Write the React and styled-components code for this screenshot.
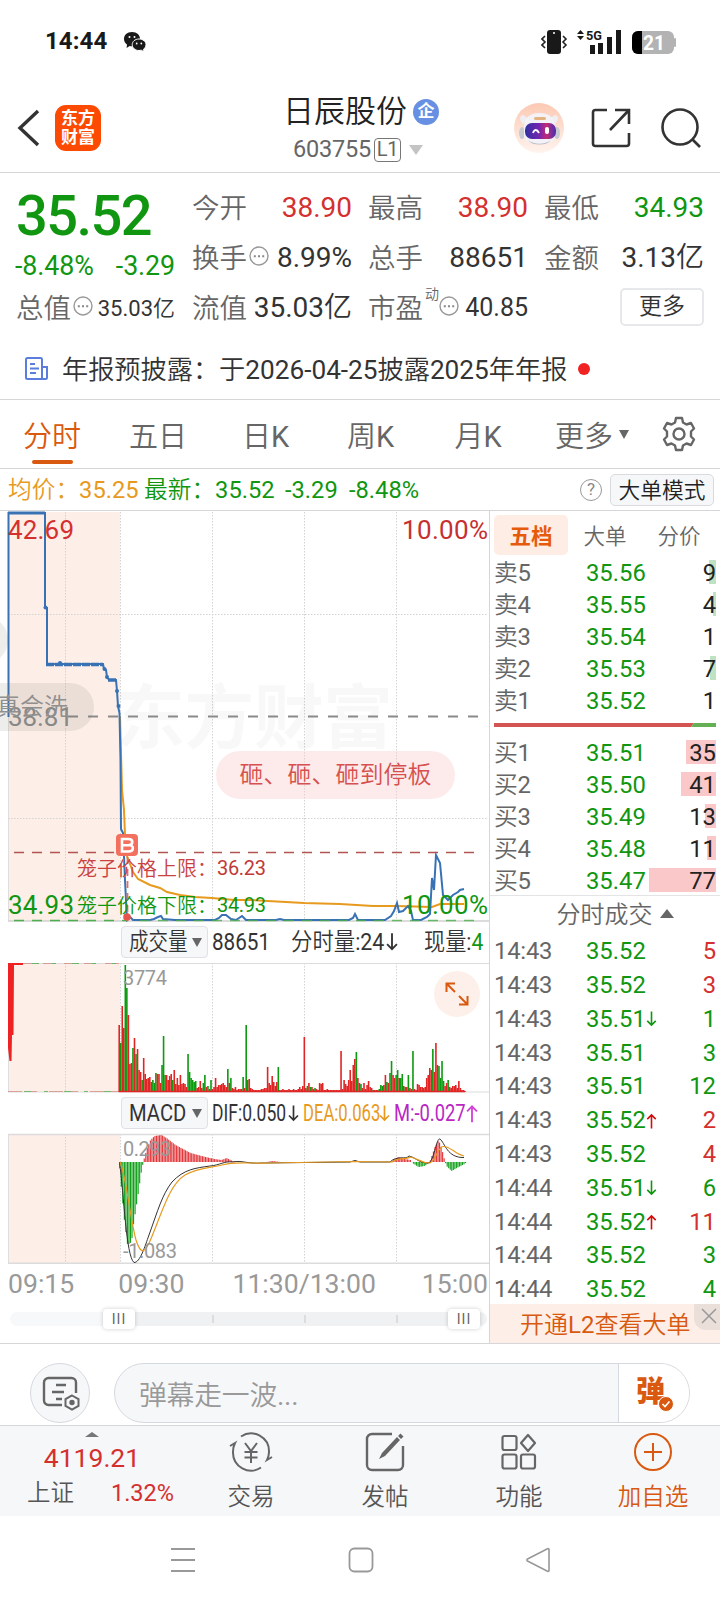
import React from 'react';
import styled, { createGlobalStyle } from 'styled-components';

const GREEN = '#109610';
const RED = '#d4302f';
const ORANGE = '#d8590f';
const LINE = '#d5d6d8';
const FONT = 'Roboto, "Noto Sans CJK SC DemiLight", "Noto Sans CJK SC", sans-serif';
const BOLD_FONT = 'Roboto, "Noto Sans CJK SC", sans-serif';

const sells = [
  { label: '卖5', price: '35.56', amount: 9, bar: 7 },
  { label: '卖4', price: '35.55', amount: 4, bar: 3 },
  { label: '卖3', price: '35.54', amount: 1, bar: 0 },
  { label: '卖2', price: '35.53', amount: 7, bar: 6 },
  { label: '卖1', price: '35.52', amount: 1, bar: 0 },
];

const buys = [
  { label: '买1', price: '35.51', amount: 35, bar: 30 },
  { label: '买2', price: '35.50', amount: 41, bar: 35 },
  { label: '买3', price: '35.49', amount: 13, bar: 11 },
  { label: '买4', price: '35.48', amount: 11, bar: 9 },
  { label: '买5', price: '35.47', amount: 77, bar: 67 },
];

const trades = [
  { time: '14:43', price: '35.52', amount: 5, side: 'buy' },
  { time: '14:43', price: '35.52', amount: 3, side: 'buy' },
  { time: '14:43', price: '35.51', amount: 1, side: 'sell', move: 'down' },
  { time: '14:43', price: '35.51', amount: 3, side: 'sell' },
  { time: '14:43', price: '35.51', amount: 12, side: 'sell' },
  { time: '14:43', price: '35.52', amount: 2, side: 'buy', move: 'up' },
  { time: '14:43', price: '35.52', amount: 4, side: 'buy' },
  { time: '14:44', price: '35.51', amount: 6, side: 'sell', move: 'down' },
  { time: '14:44', price: '35.52', amount: 11, side: 'buy', move: 'up' },
  { time: '14:44', price: '35.52', amount: 3, side: 'sell' },
  { time: '14:44', price: '35.52', amount: 4, side: 'sell' },
];

// one bar per minute, a negative number is a falling minute
const volumes = [
  67, -49, 86, 64, -127, -104, 77, 28, 29, -44, 54, -38, 43, 22, 20, -12, 34, 18, 13, 14, 15, 10, -12, -9, -19, 18, 18, 9,
  -27, -56, -17, 17, 12, 16, 18, -12, 22, 8, 14, 7, 17, 8, 9, 8, 5, -38, -20, -14, -12, -10, -11, 4, 5, 11, 4, -9, -17, 5,
  -6, 3, -12, 3, 5, 14, 5, 7, 7, 8, 9, 7, 5, -23, 9, -14, 4, 3, 5, 2, 3, 3, 3, -15, 4, -67, -12, 13, 4, 3, 2, 2,
  2, 2, 2, 3, 3, 4, 4, 25, 9, 7, 16, 10, 6, 10, -25, 2, 2, 3, 2, 2, 2, 3, 2, 2, 3, 2, 2, 3, 5, 3, 6, 55, 4, -6, 9,
  -5, 5, 3, -4, 3, 2, 9, 8, 9, 2, 2, 3, 2, 2, 2, 2, 2, 2, 2, 2, 41, 3, 12, 8, 6, 12, 22, 11, 27, 33, -40, 14, 9, -8, 4,
  9, 3, 7, 11, 5, 4, -2, 2, 2, -2, -3, -7, -6, 7, 17, -10, 9, -19, -31, 17, 14, -17, -22, 14, -14, -18, 6, -5, 5, -17,
  4, 3, -41, 3, 2, 8, 7, 5, 5, 4, 5, 14, 17, 24, 22, -43, 20, 49, 27, -26, -14, -31, -11, 6, 9, -12, 5, 4, 6, 6, 7, 4,
  11, 4, 2, 2, 1,
];

// [x, height] turning points of the MACD histogram
const histogram = [
  [119, -4], [121, -28], [124, -60], [127, -83], [131, -80], [133, -62], [137, -36], [141, -8], [143, 1], [146, 12],
  [150, 22], [154, 26], [161, 27], [166, 24], [175, 17], [190, 9], [205, 5], [214, 3], [221, 2], [226, 4], [232, 1],
  [240, 0], [266, 0], [272, 1], [280, 0], [390, 0], [394, 3], [398, 5], [404, 3], [410, 2], [412, -1], [418, -5],
  [424, -4], [428, -1], [430, 2], [434, 14], [438, 22], [441, 14], [444, 2], [446, -4], [451, -9], [458, -5], [464, -2], [466, 0],
];

const heightAt = (x) => {
  const next = histogram.findIndex((point) => point[0] > x);
  if (next < 1) return 0;
  const [x0, y0] = histogram[next - 1];
  const [x1, y1] = histogram[next];
  return y0 + ((y1 - y0) * (x - x0)) / (x1 - x0);
};

const StatusIcons = () => (
  <svg width="136" height="28" viewBox="541 27 136 28">
    <rect x="547" y="29" width="14" height="24" rx="3" fill="#191919" />
    <circle cx="554" cy="32" r="1" fill="#fff" />
    <path d="M545 35l-3 3 3 3-3 3 3 3M563 35l3 3-3 3 3 3-3 3" fill="none" stroke="#222" strokeWidth="1.6" />
    <path d="M577 33l3.5-4 3.5 4zM577 35l3.5 4 3.5-4z" fill="#191919" />
    <text x="586" y="39" fontSize="13" fontWeight="700" textLength="16" lengthAdjust="spacingAndGlyphs" fill="#191919">5G</text>
    <path d="M590 44h5v9h-5zM598 42h5v11h-5zM607 36h5v17h-5zM616 29h5v24h-5z" fill="#191919" />
    <rect x="632" y="30" width="42" height="23" rx="6" fill="#b3b3b3" />
    <rect x="674" y="37" width="2" height="9" rx="1" fill="#b3b3b3" />
    <path d="M642 30v23h-4a6 6 0 0 1-6-6V36a6 6 0 0 1 6-6z" fill="#000" />
    <text x="643" y="49" fontSize="21" fontWeight="700" textLength="22" lengthAdjust="spacingAndGlyphs" fill="#fff">21</text>
  </svg>
);

const WechatIcon = () => (
  <svg width="24" height="22" viewBox="0 0 24 22">
    <path d="M9 1C4 1 1 4 1 8c0 2.500 1.300 4.300 3 5.600L3.600 17l3-2c1 .3 2 .4 3 .4C14 15 17 12 17 8s-3-7-8-7z" fill="#191919" />
    <path d="M16 8c-4 0-6.800 2.600-6.800 5.700S12 19.500 16 19.500c.8 0 1.600-.1 2.300-.3l2.700 1.600-.5-2.600c1.500-1 2.500-2.600 2.500-4.400C23 10.600 20 8 16 8z" fill="#191919" stroke="#fff" />
    <circle cx="6.500" cy="6" r="1" fill="#fff" />
    <circle cx="11.500" cy="6" r="1" fill="#fff" />
    <circle cx="13.700" cy="12.500" r=".9" fill="#fff" />
    <circle cx="18.300" cy="12.500" r=".9" fill="#fff" />
  </svg>
);

const RobotIcon = () => (
  <svg width="50" height="52" viewBox="0 0 50 52">
    <defs>
      <linearGradient id="halo" x1="0" y1="0" x2="0" y2="1">
        <stop offset="0" stopColor="#fcc9b3" />
        <stop offset="1" stopColor="#fff4ee" />
      </linearGradient>
      <linearGradient id="visor">
        <stop offset="0" stopColor="#3230a0" />
        <stop offset=".45" stopColor="#7425b0" />
        <stop offset=".7" stopColor="#c22a77" />
        <stop offset="1" stopColor="#4430b4" />
      </linearGradient>
    </defs>
    <circle cx="25" cy="26" r="25" fill="url(#halo)" />
    <path d="M9 22C5 17 5 14 9 13l6 4zM41 22c4-5 4-8 0-9l-6 4z" fill="#efeef3" />
    <ellipse cx="8" cy="31" rx="3" ry="6" fill="#c9c9d2" />
    <ellipse cx="43" cy="31" rx="3" ry="6" fill="#c9c9d2" />
    <path d="M10 25c0-9 6-14 15.500-14S41 16 41 25v8c0 6-5 9-15.500 9S10 39 10 33z" fill="#f3f2f7" />
    <path d="M14 38c6 5 17 5 23 0-2 3-6 4.500-11.500 4.500S16 41 14 38z" fill="#b8b8c4" />
    <rect x="20" y="15" width="12" height="3" rx="1.500" fill="#e4b382" />
    <rect x="11" y="21" width="31" height="16" rx="7" fill="url(#visor)" />
    <path d="M19 31c1.500-4 4-4 6 0" fill="none" stroke="#fff" strokeWidth="1.800" />
    <rect x="31" y="25" width="4" height="7" rx="2" fill="#fff" />
  </svg>
);

const DotsIcon = () => (
  <svg width="20" height="20" viewBox="0 0 20 20">
    <circle cx="10" cy="10" r="9" fill="none" stroke="#999" strokeWidth="1.400" />
    <path d="M4.800 9.200h2v2h-2zM9 9.200h2v2H9zM13.200 9.200h2v2h-2z" fill="#888" />
  </svg>
);

const NoticeIcon = () => (
  <svg width="25" height="25" viewBox="0 0 25 25" fill="none" stroke="#5b7ede" strokeWidth="2">
    <path d="M18 23V3.500A1.500 1.500 0 0 0 16.500 2h-13A1.500 1.500 0 0 0 2 3.500v18A1.500 1.500 0 0 0 3.500 23h18a1.500 1.500 0 0 0 1.500-1.500V11h-5M6 8h5M6 12.500h9M6 17h6" />
  </svg>
);

const GearIcon = () => (
  <svg width="36" height="36" viewBox="0 0 36 36" fill="none" stroke="#666" strokeWidth="2.400" strokeLinejoin="round">
    <path d="M15 2h6l1 4.500 3.500 2 4.500-1.500 3 5.500-3 3v5l3 3-3 5.500-4.500-1.500-3.500 2L21 34h-6l-1-4.500-3.500-2L6 29l-3-5.500 3-3v-5l-3-3L6 7l4.500 1.500 3.500-2z" />
    <circle cx="18" cy="18" r="5.500" />
  </svg>
);

const MoveArrow = ({ up, color, width = 11, height = 17 }) => (
  <svg width={width} height={height} viewBox="0 0 11 17" fill="none" stroke={color} strokeWidth="1.700">
    <path d={up ? 'M5.500 16.500V2M1 6.500L5.500 2 10 6.500' : 'M5.500.5V15M1 10.500L5.500 15 10 10.500'} />
  </svg>
);

const Grid = ({ top, bottom }) => (
  <>
    <rect x="8" y={top} width="112" height={bottom - top} fill="#fdeee8" />
    <path
      d={[65.5, 120.5, 212.5, 304.5, 396.5].map((x) => `M${x} ${top}V${bottom}`).join('')}
      stroke="#d2d2d2"
      strokeDasharray="1.5 1.5"
    />
    <path d={`M8.500 ${top}V${bottom}`} stroke="#dedede" />
  </>
);

const PriceChart = () => (
  <ChartSvg height="411" viewBox="0 511 489 411">
    <Grid top={512} bottom={921} />
    <path d="M8 614.500H487M8 818.500H487" stroke="#d2d2d2" strokeDasharray="1.5 1.5" />
    <Watermark x="115" y="743" textLength="278">东方财富</Watermark>
    <path d="M8 921H489" stroke="#d0d0d0" strokeWidth="1.500" />
    <path d="M68 716.500H480" stroke="#8a8a8a" strokeWidth="1.800" strokeDasharray="10 10" />
    <path d="M14 852.500H475" stroke="#b25450" strokeWidth="1.300" strokeDasharray="10 8" />
    <polyline
      fill="none"
      stroke="#e79a1e"
      strokeWidth="2"
      points="120,716 122,790 124,810 125,835 127,856 130,864 133,872 138,879 150,885 160,888 167,892 180,895 195,897 212,898 235,900 250,900 304,903 340,904 373,906 396,906 432,907 440,904 464,904"
    />
    <polyline
      fill="none"
      stroke="#3872b5"
      strokeWidth="2"
      points="8.500,717 8.500,513 45,513 45,608 47,608 47,664 103,664 104,669 106,670 107,677 109,680 116,680 117,691 118,706 119.500,713 120.500,760 121,829 123,833 125,880 127,920 130,917 133,920 150,920 154,919 158,917 161,916 163,919 175,920 215,920 219,918 222,915 226,915 231,919 236,920 242,916 246,920 276,920 280,919 284,920 349,920 353,918 355,914 358,920 385,920 391,916 394,911 397,903 399,912 403,911 408,906 411,911 413,920 421,920 427,917 430,914 432,878 434,890 436,855 440,863 443,895 448,900 453,895 458,892 460,890 464,889"
    />
    <path d="M8 513H45" stroke="#3872b5" strokeWidth="3" />
    <path d="M46 664.500H103M108 680H117" stroke="#3872b5" strokeWidth="3.500" strokeDasharray="8 1" />
    <g fill="#3872b5">
      <circle cx="45.500" cy="607.500" r="2" />
      <circle cx="60" cy="663" r="2" />
      <circle cx="104.500" cy="669" r="2" />
      <circle cx="107" cy="677" r="2" />
      <circle cx="117" cy="691" r="2" />
      <circle cx="118.500" cy="706" r="2" />
    </g>
    <path d="M14 920.500H128" stroke="#4cae4c" strokeWidth="1.600" strokeDasharray="10 8" />
    <path d="M140 920.500H475" stroke="#4cae4c" strokeWidth="1.600" strokeDasharray="10 8" opacity=".8" />
    <path d="M127.500 857V914" stroke="#e2706a" strokeWidth="1.800" strokeDasharray="7 5" />
    <circle cx="127" cy="917" r="3.800" fill="#e9544a" />
    <rect x="116" y="834" width="22" height="22" rx="4" fill="#f3705f" />
    <path d="M122 839h6.500c5 0 5 5.600.5 6 5.500.4 5 6.500-.5 6.500H122zM122 845.200h7" fill="none" stroke="#fff" strokeWidth="2.600" />
    <g fontSize="26">
      <text x="8" y="539" textLength="66" fill={RED}>42.69</text>
      <text x="402" y="539" textLength="86" fill="#c63030">10.00%</text>
      <text x="8" y="726" textLength="65" fill="#8d8d8d">38.81</text>
      <text x="8" y="914" textLength="66" fill={GREEN}>34.93</text>
      <text x="402" y="914" textLength="86" fill={GREEN}>10.00%</text>
    </g>
    <g fontSize="20">
      <text x="77" y="875.500" fill="#c9423f">笼子价格上限：</text>
      <text x="217" y="875" textLength="49" fill="#c03a38">36.23</text>
      <text x="77" y="912.500" fill={GREEN}>笼子价格下限：</text>
      <text x="217" y="912" textLength="49" fill={GREEN}>34.93</text>
    </g>
  </ChartSvg>
);

const VolumeChart = () => (
  <ChartSvg height="132" viewBox="0 962 489 132">
    <Grid top={963} bottom={1092} />
    <path d="M8 963.500H489M8 1092H489" stroke="#dcdcdc" />
    <path d="M8 963h15v2h-9l-.5 70h-1.500l-.5 26h-2l-1.500-13z" fill="#ee2222" />
    <g opacity=".55">
      <path d="M23 963.500H120M8 1091.500H120" stroke="#c96a5a" strokeDasharray="14 6 9 12" />
      <path d="M32 963.500H116M24 1091.500H118" stroke={GREEN} strokeDasharray="7 13 4 16" />
    </g>
    {volumes.map((v, i) => (
      <rect
        key={i}
        x={118.4 + i * 1.53}
        y={1092 - Math.abs(v)}
        width="1.6"
        height={Math.abs(v)}
        fill={v < 0 ? '#0c9a10' : '#e02525'}
      />
    ))}
    <path d="M119 1091.500H465" stroke="#e02525" strokeWidth="1.400" />
    <text x="123" y="985" fontSize="20" textLength="44" fill="#999">3774</text>
    <circle cx="457" cy="994" r="23" fill="#fdf0ea" />
    <path d="M455 992l-8-8M446.500 992v-8.500h8.500M459 996l8 8M467.500 996v8.500H459" fill="none" stroke={ORANGE} strokeWidth="2" />
  </ChartSvg>
);

const MacdChart = () => {
  const bars = [];
  for (let x = 119.2; x < 465; x += 1.53) bars.push([x, heightAt(x)]);
  return (
    <ChartSvg height="133" viewBox="0 1132 489 133">
      <Grid top={1134} bottom={1263} />
      <path d="M8 1134.500H489M8 1263.200H489" stroke="#dcdcdc" strokeWidth="1.400" />
      {bars.map(([x, h]) => (
        <rect key={x} x={x} y={h > 0 ? 1162 - h : 1162} width="1.150" height={Math.abs(h)} fill={h > 0 ? '#e2383c' : '#12a01b'} />
      ))}
      <path
        fill="none"
        stroke="#333"
        d="M119.500 1162C124 1195 126 1256 134 1262.500C140 1263 145 1246 149 1235C158 1210 162 1195 172 1182C184 1169 196 1168 210 1166C221 1165 223 1161 233 1162C242 1160 246 1164 262 1163L350 1162L355 1160.500L360 1162L390 1162C397 1155 406 1160 409 1156C417 1158 418 1163 429 1163C435 1158 436 1138 440 1139C445 1143 447 1158 464 1157.500"
      />
      <path
        fill="none"
        stroke="#e79a1e"
        strokeWidth="1.200"
        d="M120 1162C126 1175 130 1218 136 1240C141 1256 145 1252 150 1241C162 1213 169 1185 185 1175C199 1167 211 1168 222 1165C236 1161 250 1164 270 1163L355 1161.500L392 1162C398 1157 406 1160 410 1157C418 1158 420 1163 430 1163C436 1160 438 1147 443 1146.500C451 1146 454 1154 464 1156"
      />
      <text x="123" y="1156" fontSize="20" textLength="48" fill="#999">0.293</text>
      <text x="123" y="1258" fontSize="20" textLength="54" fill="#999">-1.083</text>
    </ChartSvg>
  );
};

const BookRow = ({ label, price, amount, bar, color }) => (
  <Row $height={32}>
    <RowLabel>{label}</RowLabel>
    <RowPrice>{price}</RowPrice>
    <Amount>
      <AmountBar $color={color} style={{ width: bar }} />
      <span>{amount}</span>
    </Amount>
  </Row>
);

const App = () => (
  <Page>
    <GlobalStyle />
    <StatusBar>
      <Clock>14:44</Clock>
      <WechatIcon />
      <Spacer />
      <StatusIcons />
    </StatusBar>

    <Header>
      <svg width="24" height="38" viewBox="0 0 24 38" fill="none" stroke="#333" strokeWidth="3.400">
        <path d="M21 2L3 19l18 17" />
      </svg>
      <Logo>
        <span>东方</span>
        <span>财富</span>
      </Logo>
      <StockTitle>
        <StockName>
          日辰股份<Badge>企</Badge>
        </StockName>
        <StockCode>
          603755<Level>L1</Level>
          <Triangle $size={7} $height={10} $color="#c4c4c4" />
        </StockCode>
      </StockTitle>
      <RobotIcon />
      <svg width="40" height="40" viewBox="0 0 40 40" fill="none" stroke="#333" strokeWidth="2.600">
        <path d="M16 2H4.500A2.500 2.500 0 0 0 2 4.500v31A2.500 2.500 0 0 0 4.500 38h31a2.500 2.500 0 0 0 2.500-2.500V25M24 2h14v14M38 2L19 22" />
      </svg>
      <svg width="42" height="42" viewBox="0 0 42 42" fill="none" stroke="#333" strokeWidth="2.600">
        <circle cx="20" cy="20" r="17.500" />
        <path d="M32 32l8 8" />
      </svg>
    </Header>

    <Quote>
      <Latest>
        <Price>35.52</Price>
        <Change>
          <span>-8.48%</span>
          <span>-3.29</span>
        </Change>
        <Field $height={46}>
          <FieldLabel>总值</FieldLabel>
          <DotsIcon />
          <Value $size={22}>35.03亿</Value>
        </Field>
      </Latest>
      <Fields>
        <Field><FieldLabel>今开</FieldLabel><Value $color={RED}>38.90</Value></Field>
        <Field><FieldLabel>最高</FieldLabel><Value $color={RED}>38.90</Value></Field>
        <Field><FieldLabel>最低</FieldLabel><Value $color={GREEN}>34.93</Value></Field>
        <Field><FieldLabel>换手</FieldLabel><DotsIcon /><Value>8.99%</Value></Field>
        <Field><FieldLabel>总手</FieldLabel><Value>88651</Value></Field>
        <Field><FieldLabel>金额</FieldLabel><Value>3.13亿</Value></Field>
        <Field><FieldLabel>流值</FieldLabel><Value>35.03亿</Value></Field>
        <Field><FieldLabel>市盈</FieldLabel><Sup>动</Sup><DotsIcon /><Value $size={25}>40.85</Value></Field>
        <Field><MoreButton>更多</MoreButton></Field>
      </Fields>
    </Quote>

    <Notice>
      <NoticeIcon />
      <NoticeText>年报预披露：于2026-04-25披露2025年年报</NoticeText>
      <Dot />
    </Notice>

    <Tabs>
      <Tab $active $width={104}>分时</Tab>
      <Tab $width={108}>五日</Tab>
      <Tab $width={107}>日K</Tab>
      <Tab $width={103}>周K</Tab>
      <Tab $width={112}>月K</Tab>
      <Tab $width={116}>
        更多<Triangle $size={5} $height={9} $color="#666" />
      </Tab>
      <Spacer />
      <GearIcon />
    </Tabs>

    <InfoBar>
      <InfoText $color="#e79a1e" $width={136}><span>均价：</span>35.25</InfoText>
      <InfoText $color={GREEN} $width={141}><span>最新：</span>35.52</InfoText>
      <InfoText $color={GREEN} $width={64}>-3.29</InfoText>
      <InfoText $color={GREEN}>-8.48%</InfoText>
      <Spacer />
      <Help>?</Help>
      <ModeButton>大单模式</ModeButton>
    </InfoBar>

    <Main>
      <Charts>
        <PriceArea>
          <PriceChart />
          <Bullet $left={216} $top={240} $width={239}>砸、砸、砸到停板</Bullet>
          <Bullet $gray $left={-60} $top={172} $width={154}>真会洗</Bullet>
          <Bullet $gray $left={-60} $top={105} $width={68} />
        </PriceArea>
        <IndicatorBar $height={40}>
          <Picker><Squeezed $scale={0.83} $width={60}>成交量</Squeezed><Triangle $size={5.5} $height={9} $color="#666" /></Picker>
          <Squeezed $scale={0.88} $width={79}>88651</Squeezed>
          <Squeezed $scale={0.91} $width={95}>分时量:24</Squeezed>
          <MoveArrow color="#333" width={12} height={20} />
          <Spacer />
          <Squeezed $scale={0.9} $width={60}>现量:<Green>4</Green></Squeezed>
        </IndicatorBar>
        <VolumeChart />
        <IndicatorBar $height={38}>
          <Picker><Squeezed $scale={0.86} $width={60}>MACD</Squeezed><Triangle $size={5.5} $height={9} $color="#666" /></Picker>
          <Squeezed $scale={0.745} $width={76}>DIF:0.050</Squeezed>
          <MoveArrow color="#333" height={19} />
          <Squeezed $scale={0.71} $width={76} $color="#e79a1e" $left={4}>DEA:0.063</Squeezed>
          <MoveArrow color="#e79a1e" height={19} />
          <Squeezed $scale={0.78} $width={72} $color="#b927c4" $left={4}>M:-0.027</Squeezed>
          <MoveArrow up color="#d243da" width={12} height={19} />
        </IndicatorBar>
        <MacdChart />
        <TimeAxis>
          <span>09:15</span>
          <span>09:30</span>
          <span>11:30/13:00</span>
          <span>15:00</span>
        </TimeAxis>
        <Range>
          <Track>
            <Handle $left={93}>III</Handle>
            <Tick $left={202} />
            <Tick $left={294} />
            <Tick $left={386} />
            <Handle $left={438}>III</Handle>
          </Track>
        </Range>
      </Charts>

      <Side>
        <SideTabs>
          <SideTab $active>五档</SideTab>
          <SideTab>大单</SideTab>
          <SideTab>分价</SideTab>
        </SideTabs>
        {sells.map((row) => <BookRow key={row.label} {...row} color="#bfe3c2" />)}
        <Ratio>
          <svg width="222" height="4" viewBox="0 0 222 4">
            <path d="M0 0h200l-3 4H0z" fill="#d35453" />
            <path d="M200 0h22v4h-25z" fill="#65b054" />
          </svg>
        </Ratio>
        {buys.map((row) => <BookRow key={row.label} {...row} color="#fbc8c9" />)}
        <TradesTitle>
          分时成交<Triangle $up $size={7} $height={9} $color="#666" />
        </TradesTitle>
        {trades.map((trade, index) => (
          <Row key={index} $height={33.8}>
            <RowLabel>{trade.time}</RowLabel>
            <RowPrice>
              {trade.price}
              {trade.move && <MoveArrow up={trade.move === 'up'} color={trade.move === 'up' ? '#d40e0e' : GREEN} height={16} />}
            </RowPrice>
            <Amount $color={trade.side === 'buy' ? RED : GREEN}><span>{trade.amount}</span></Amount>
          </Row>
        ))}
        <Promo>
          开通L2查看大单
          <Close>
            <svg width="16" height="16" viewBox="0 0 16 16" stroke="#999" strokeWidth="1.500">
              <path d="M1 1l14 14M15 1L1 15" />
            </svg>
          </Close>
        </Promo>
      </Side>
    </Main>

    <CommentBar>
      <RoundButton>
        <svg width="38" height="36" viewBox="0 0 38 36" fill="none" stroke="#666" strokeWidth="2.400">
          <path d="M20 29H6.500A4.500 4.500 0 0 1 2 24.500v-18A4.500 4.500 0 0 1 6.500 2h23A4.500 4.500 0 0 1 34 6.500V17M14 9h10M10 16h12M14 23h6" />
          <path d="M30 19.500l6.500 3.700v6.600L30 33.500l-6.500-3.700v-6.600z" strokeWidth="2" />
          <circle cx="30" cy="26.500" r="1.500" fill="#666" />
        </svg>
      </RoundButton>
      <CommentInput>
        <Placeholder>弹幕走一波...</Placeholder>
        <Send>
          <span>弹</span>
          <Check viewBox="0 0 16 16">
            <circle cx="8" cy="8" r="7.500" fill={ORANGE} stroke="#fff" />
            <path d="M4.500 8l2.500 2.600L11.500 5.500" fill="none" stroke="#fff" strokeWidth="1.600" />
          </Check>
        </Send>
      </CommentInput>
    </CommentBar>

    <BottomNav>
      <IndexBox>
        <Triangle $up $size={7} $height={5} $color="#777" />
        <IndexValue>4119.21</IndexValue>
        <IndexRow>
          <span>上证</span>
          <Red>1.32%</Red>
        </IndexRow>
      </IndexBox>
      <NavItem>
        <svg width="44" height="40" viewBox="0 0 44 40" fill="none" stroke="#666" strokeWidth="2">
          <path d="M12 4.500A18 18 0 0 1 40 20c0 3-1 6-2 8l5-3M32 35.500A18 18 0 0 1 4 20c0-3 .5-6 2-9l-5 3M16 11l6 8 6-8M22 19v12M15.500 20h13M15.500 25.500h13" />
        </svg>
        交易
      </NavItem>
      <NavItem>
        <svg width="40" height="40" viewBox="0 0 40 40" fill="none" stroke="#666" strokeWidth="2.400">
          <path d="M27 2H7a5 5 0 0 0-5 5v26a5 5 0 0 0 5 5h26a5 5 0 0 0 5-5V14" />
          <path d="M17 21L32 5l3 3-15 16-6 3zM33 4l2.500-2.500 3 3L36 7z" fill="#666" stroke="none" />
        </svg>
        发帖
      </NavItem>
      <NavItem>
        <svg width="40" height="40" viewBox="0 0 40 40" fill="none" stroke="#666" strokeWidth="2.200">
          <rect x="3.500" y="4" width="14" height="14" rx="2" />
          <rect x="3.500" y="22.500" width="14" height="14" rx="2" />
          <rect x="22" y="22.500" width="14" height="14" rx="2" />
          <path d="M29 3l7 8-7 8-7-8z" strokeLinejoin="round" />
        </svg>
        功能
      </NavItem>
      <NavItem $color={ORANGE}>
        <svg width="40" height="40" viewBox="0 0 40 40" fill="none" stroke={ORANGE} strokeWidth="2">
          <circle cx="20" cy="20" r="18" />
          <path d="M20 11v18M11 20h18" />
        </svg>
        加自选
      </NavItem>
    </BottomNav>

    <SystemNav>
      <svg width="26" height="26" viewBox="0 0 26 26" fill="none" stroke="#999" strokeWidth="1.800">
        <path d="M1 2h24M1 13h24M1 24h24" />
      </svg>
      <svg width="26" height="26" viewBox="0 0 26 26" fill="none" stroke="#999" strokeWidth="1.800">
        <rect x="1.500" y="1.500" width="23" height="23" rx="5" />
      </svg>
      <svg width="26" height="26" viewBox="0 0 26 26" fill="none" stroke="#999" strokeWidth="1.600" strokeLinejoin="round">
        <path d="M24 2.500v21c0 .8-.8 1-1.500.7L2.500 14c-.8-.5-.8-1.500 0-2L22.500 1.800c.7-.4 1.500 0 1.500.7z" />
      </svg>
    </SystemNav>
  </Page>
);

const GlobalStyle = createGlobalStyle`
  body {
    margin: 0;
    background: #fff;
  }

  * {
    box-sizing: border-box;
  }

  svg {
    display: block;
    flex-shrink: 0;
  }
`;

const Page = styled.div`
  width: 720px;
  height: 1604px;
  overflow: hidden;
  color: #333;
  font-family: ${FONT};
  line-height: 1.15;
  white-space: nowrap;
`;

const Spacer = styled.div`
  flex: 1;
`;

const Green = styled.span`
  color: ${GREEN};
`;

const Red = styled.span`
  color: ${RED};
`;

const Triangle = styled.i`
  width: 0;
  height: 0;
  flex-shrink: 0;
  border: ${(p) => p.$size}px solid transparent;
  border-top: ${(p) => (p.$up ? '0' : `${p.$height}px solid ${p.$color}`)};
  border-bottom: ${(p) => (p.$up ? `${p.$height}px solid ${p.$color}` : '0')};
`;

const StatusBar = styled.div`
  display: flex;
  align-items: center;
  gap: 16px;
  height: 82px;
  padding: 1px 43px 0 45px;
`;

const Clock = styled.div`
  width: 62px;
  padding-top: 1px;
  font-size: 24px;
  font-weight: 700;
  letter-spacing: 0.1px;
  color: #191919;
`;

const Header = styled.header`
  display: flex;
  align-items: center;
  height: 91px;
  padding: 2px 18px 0 17px;
  border-bottom: 1px solid ${LINE};

  > svg:nth-of-type(3) {
    margin-left: 27px;
  }

  > svg:nth-of-type(4) {
    margin-left: 29px;
  }
`;

const Logo = styled.div`
  display: flex;
  flex-direction: column;
  align-items: center;
  justify-content: center;
  width: 46px;
  height: 46px;
  margin-left: 14px;
  border-radius: 11px;
  background: #fc4a02;
  color: #fff;
  font-family: ${BOLD_FONT};
  font-size: 17px;
  font-weight: 700;
  line-height: 19px;
`;

const StockTitle = styled.div`
  display: flex;
  flex: 1;
  flex-direction: column;
  align-items: flex-start;
  padding: 5px 0 0 182px;
`;

const StockName = styled.div`
  display: flex;
  align-items: center;
  height: 38px;
  font-size: 31px;
  color: #222;
`;

const Badge = styled.span`
  display: flex;
  align-items: center;
  justify-content: center;
  width: 26px;
  height: 26px;
  margin-left: 6px;
  border-radius: 50%;
  background: #6890e2;
  color: #fff;
  font-family: ${BOLD_FONT};
  font-size: 17px;
  font-weight: 700;
`;

const StockCode = styled.div`
  display: flex;
  align-items: center;
  height: 38px;
  padding-left: 10px;
  font-size: 23.500px;
  letter-spacing: -0.2px;
  color: #666;

  i {
    margin-left: 8px;
  }
`;

const Level = styled.span`
  display: flex;
  align-items: center;
  justify-content: center;
  width: 27px;
  height: 24px;
  margin-left: 3px;
  border: 1.500px solid #777;
  border-radius: 4px;
  font-size: 20px;
`;

const Quote = styled.section`
  display: flex;
  gap: 17px;
  height: 159px;
  padding: 9px 16px 0;
`;

const Latest = styled.div`
  width: 159px;
`;

const Price = styled.div`
  height: 66px;
  font-size: 56px;
  font-weight: 500;
  line-height: 69px;
  letter-spacing: -1.600px;
  color: ${GREEN};
`;

const Change = styled.div`
  display: flex;
  align-items: center;
  justify-content: space-between;
  height: 36px;
  margin-left: -1px;
  font-size: 26.800px;
  letter-spacing: -0.1px;
  color: ${GREEN};
`;

const Fields = styled.div`
  display: grid;
  grid-template-columns: repeat(3, 160px);
  grid-auto-rows: 50px;
  column-gap: 16px;
`;

const Field = styled.div`
  display: flex;
  align-items: center;
  height: ${(p) => p.$height || 50}px;

  svg {
    margin-top: -2px;
  }
`;

const FieldLabel = styled.span`
  margin-right: 2px;
  padding-top: 4px;
  font-size: 27.500px;
  color: #666;
`;

const Value = styled.span`
  margin-left: auto;
  padding-top: 3px;
  font-size: ${(p) => p.$size || 28}px;
  color: ${(p) => p.$color || '#333'};
`;

const Sup = styled.sup`
  align-self: flex-start;
  margin-top: 4px;
  font-size: 14px;
  color: #666;
`;

const MoreButton = styled.button`
  width: 84px;
  height: 38px;
  margin: -1px 0 0 auto;
  padding: 0;
  border: 2px solid #e6e8eb;
  border-radius: 5px;
  background: #fff;
  color: #333;
  font: 23px/1 ${FONT};
`;

const Notice = styled.section`
  display: flex;
  align-items: center;
  height: 68px;
  padding: 6px 24px 0;
  border-bottom: 1px solid ${LINE};
`;

const NoticeText = styled.span`
  margin-left: 13px;
  padding-top: 3px;
  font-size: 26.200px;
`;

const Dot = styled.span`
  width: 12px;
  height: 12px;
  margin-left: 11px;
  border-radius: 50%;
  background: #f12222;
`;

const Tabs = styled.nav`
  display: flex;
  align-items: center;
  height: 69px;
  padding-right: 23px;
  border-bottom: 1px solid ${LINE};
`;

const Tab = styled.div`
  position: relative;
  display: flex;
  align-items: center;
  justify-content: center;
  gap: 6px;
  width: ${(p) => p.$width}px;
  height: 68px;
  padding-top: 7px;
  font-size: 29px;
  color: ${(p) => (p.$active ? ORANGE : '#666')};

  i {
    margin-top: -6px;
  }

  &::after {
    content: '';
    display: ${(p) => (p.$active ? 'block' : 'none')};
    position: absolute;
    bottom: 4px;
    left: 32px;
    width: 41px;
    height: 4px;
    border-radius: 2px;
    background: ${ORANGE};
  }
`;

const InfoBar = styled.div`
  display: flex;
  align-items: center;
  height: 42px;
  padding: 0 6px 0 8px;
  border-bottom: 1px solid ${LINE};
`;

const InfoText = styled.span`
  display: flex;
  width: ${(p) => (p.$width ? `${p.$width}px` : 'auto')};
  padding-top: 2px;
  font-size: 23.700px;
  color: ${(p) => p.$color};
`;

const Help = styled.span`
  display: flex;
  align-items: center;
  justify-content: center;
  width: 22px;
  height: 22px;
  margin-right: 8px;
  border: 1.500px solid #999;
  border-radius: 50%;
  color: #888;
  font-size: 17px;
`;

const ModeButton = styled.button`
  width: 104px;
  height: 32px;
  padding: 2px 0 0;
  border: 1px solid #d9dbdf;
  border-radius: 5px;
  background: #f6f7f9;
  color: #222;
  font: 21.700px/1 ${FONT};
`;

const Main = styled.main`
  display: flex;
  height: 833px;
  border-bottom: 1px solid ${LINE};
`;

const Charts = styled.section`
  width: 490px;
  border-right: 1px solid ${LINE};
`;

const PriceArea = styled.div`
  position: relative;
  overflow: hidden;
`;

const ChartSvg = styled.svg`
  width: 489px;
`;

const Watermark = styled.text`
  font-family: ${BOLD_FONT};
  font-size: 70px;
  font-weight: 700;
  fill: rgba(0, 0, 0, 0.028);
`;

const Bullet = styled.div`
  position: absolute;
  top: ${(p) => p.$top}px;
  left: ${(p) => p.$left}px;
  display: flex;
  align-items: center;
  justify-content: ${(p) => (p.$gray ? 'flex-end' : 'center')};
  width: ${(p) => p.$width}px;
  height: 48px;
  padding: 2px ${(p) => (p.$gray ? 26 : 0)}px 0;
  border-radius: 24px;
  background: ${(p) => (p.$gray ? 'rgba(110, 110, 100, 0.12)' : 'rgba(249, 205, 208, 0.4)')};
  color: ${(p) => (p.$gray ? '#8f8f8f' : '#d6504e')};
  font-size: 24px;
`;

const IndicatorBar = styled.div`
  display: flex;
  align-items: center;
  height: ${(p) => p.$height}px;
  padding: 0 5px 0 121px;
`;

const Picker = styled.div`
  display: flex;
  align-items: center;
  gap: 3px;
  width: 87px;
  height: 32px;
  margin-right: 4px;
  padding-left: 7px;
  border: 1px solid #dfe1e6;
  border-radius: 4px;
  background: #f6f7f9;
`;

const Squeezed = styled.span`
  width: ${(p) => p.$width / p.$scale}px;
  margin-right: ${(p) => p.$width - p.$width / p.$scale}px;
  margin-left: ${(p) => p.$left || 0}px;
  padding-top: 2px;
  flex-shrink: 0;
  font-size: 23.500px;
  color: ${(p) => p.$color || '#333'};
  transform: scaleX(${(p) => p.$scale});
  transform-origin: left center;
`;

const TimeAxis = styled.div`
  display: flex;
  align-items: center;
  height: 36px;
  padding: 3px 1px 0 8px;
  font-size: 26.600px;
  color: #999;

  span:nth-child(2) {
    margin-left: 44px;
  }

  span:nth-child(3) {
    margin-left: 48px;
  }

  span:last-child {
    margin-left: auto;
  }
`;

const Range = styled.div`
  padding: 11px 2px 0 10px;
`;

const Track = styled.div`
  position: relative;
  height: 14px;
  border-radius: 7px;
  background: linear-gradient(90deg, #f7f8fa 100px, #f0f1f3 100px);
`;

const Handle = styled.span`
  position: absolute;
  top: -3px;
  left: ${(p) => p.$left}px;
  width: 32px;
  height: 20px;
  border-radius: 4px;
  background: #fff;
  box-shadow: 0 0 4px rgba(0, 0, 0, 0.2);
  color: #666;
  font-size: 14px;
  letter-spacing: 1px;
  line-height: 21px;
  text-align: center;
`;

const Tick = styled.i`
  position: absolute;
  top: 3px;
  left: ${(p) => p.$left}px;
  width: 1.500px;
  height: 8px;
  background: #ddd;
`;

const Side = styled.aside`
  display: flex;
  flex-direction: column;
  width: 230px;
`;

const SideTabs = styled.div`
  display: flex;
  height: 46px;
  padding: 4px 0 0 4px;
`;

const SideTab = styled.div`
  display: flex;
  align-items: center;
  justify-content: center;
  width: 74px;
  height: 40px;
  padding-top: 4px;
  border-radius: 5px;
  background: ${(p) => (p.$active ? '#feede4' : 'none')};
  color: ${(p) => (p.$active ? '#e65a0c' : '#666')};
  font-family: ${(p) => (p.$active ? BOLD_FONT : FONT)};
  font-size: 21.500px;
  font-weight: ${(p) => (p.$active ? 700 : 400)};
`;

const Row = styled.div`
  display: flex;
  align-items: center;
  flex-shrink: 0;
  height: ${(p) => p.$height}px;
  padding: 0 4px 0 4px;
  font-size: 23.800px;
`;

const RowLabel = styled.span`
  width: 92px;
  padding-top: 2px;
  color: #666;
  letter-spacing: -0.2px;
`;

const RowPrice = styled.span`
  display: flex;
  align-items: center;
  padding-top: 2px;
  color: ${GREEN};
`;

const Amount = styled.span`
  position: relative;
  display: flex;
  align-items: center;
  justify-content: flex-end;
  flex: 1;
  height: 24px;
  color: ${(p) => p.$color || '#222'};

  span {
    position: relative;
    padding-top: 2px;
  }
`;

const AmountBar = styled.i`
  position: absolute;
  top: -1px;
  right: 0;
  height: 24px;
  background: ${(p) => p.$color};
`;

const Ratio = styled.div`
  height: 20px;
  padding: 6px 4px 0;
`;

const TradesTitle = styled.div`
  display: flex;
  align-items: center;
  justify-content: center;
  gap: 7px;
  height: 39px;
  margin-top: -2px;
  padding: 2px 0 0 20px;
  border-top: 1px solid #e4e4e6;
  color: #666;
  font-size: 24px;

  i {
    margin-top: -6px;
  }
`;

const Promo = styled.div`
  position: relative;
  z-index: 1;
  flex: 1;
  margin-top: -2px;
  padding: 8px 0 0 30px;
  background: #fdefe8;
  color: ${ORANGE};
  font-size: 24px;
`;

const Close = styled.span`
  position: absolute;
  top: 0;
  right: 0;
  width: 26px;
  height: 26px;
  padding: 4px 0 0 7px;
  border-bottom-left-radius: 12px;
  background: #ebdfda;
`;

const CommentBar = styled.section`
  display: flex;
  gap: 24px;
  height: 82px;
  padding: 19px 30px 0;
  border-bottom: 1px solid ${LINE};
`;

const RoundButton = styled.div`
  display: flex;
  align-items: center;
  justify-content: center;
  width: 60px;
  height: 60px;
  padding: 2px 0 0 2px;
  border: 1px solid #d6d9df;
  border-radius: 50%;
  background: #f6f7f9;
`;

const CommentInput = styled.div`
  display: flex;
  align-items: center;
  width: 576px;
  height: 60px;
  overflow: hidden;
  border: 1px solid #d6d9df;
  border-radius: 30px;
  background: #f6f7f9;
`;

const Placeholder = styled.span`
  flex: 1;
  padding: 5px 0 0 24px;
  font-size: 27.800px;
  letter-spacing: -0.2px;
  color: #999;
`;

const Send = styled.div`
  position: relative;
  width: 71px;
  height: 60px;
  padding: 13px 0 0 17px;
  border-left: 1px solid #d6d9df;
  background: #fff;
  color: ${ORANGE};
  font-family: ${BOLD_FONT};
  font-size: 29px;
  font-weight: 900;
`;

const Check = styled.svg`
  position: absolute;
  top: 33px;
  left: 39px;
  width: 16px;
  height: 16px;
`;

const BottomNav = styled.nav`
  display: flex;
  height: 90px;
  background: #f6f7f9;
`;

const IndexBox = styled.div`
  display: flex;
  flex-direction: column;
  align-items: center;
  width: 184px;
  padding-top: 6px;
`;

const IndexValue = styled.div`
  margin-top: 6px;
  font-size: 26.500px;
  color: ${RED};
`;

const IndexRow = styled.div`
  display: flex;
  align-items: center;
  justify-content: space-between;
  width: 147px;
  height: 34px;
  margin-top: 3px;
  margin-left: 17px;
  font-size: 23.500px;
  color: #555;
`;

const NavItem = styled.div`
  display: flex;
  flex-direction: column;
  align-items: center;
  gap: 12px;
  width: 134px;
  padding-top: 6px;
  color: ${(p) => p.$color || '#555'};
  font-size: 23.500px;
`;

const SystemNav = styled.div`
  display: flex;
  align-items: center;
  justify-content: space-between;
  height: 88px;
  padding: 0 169px 0 170px;
`;

export default App;
